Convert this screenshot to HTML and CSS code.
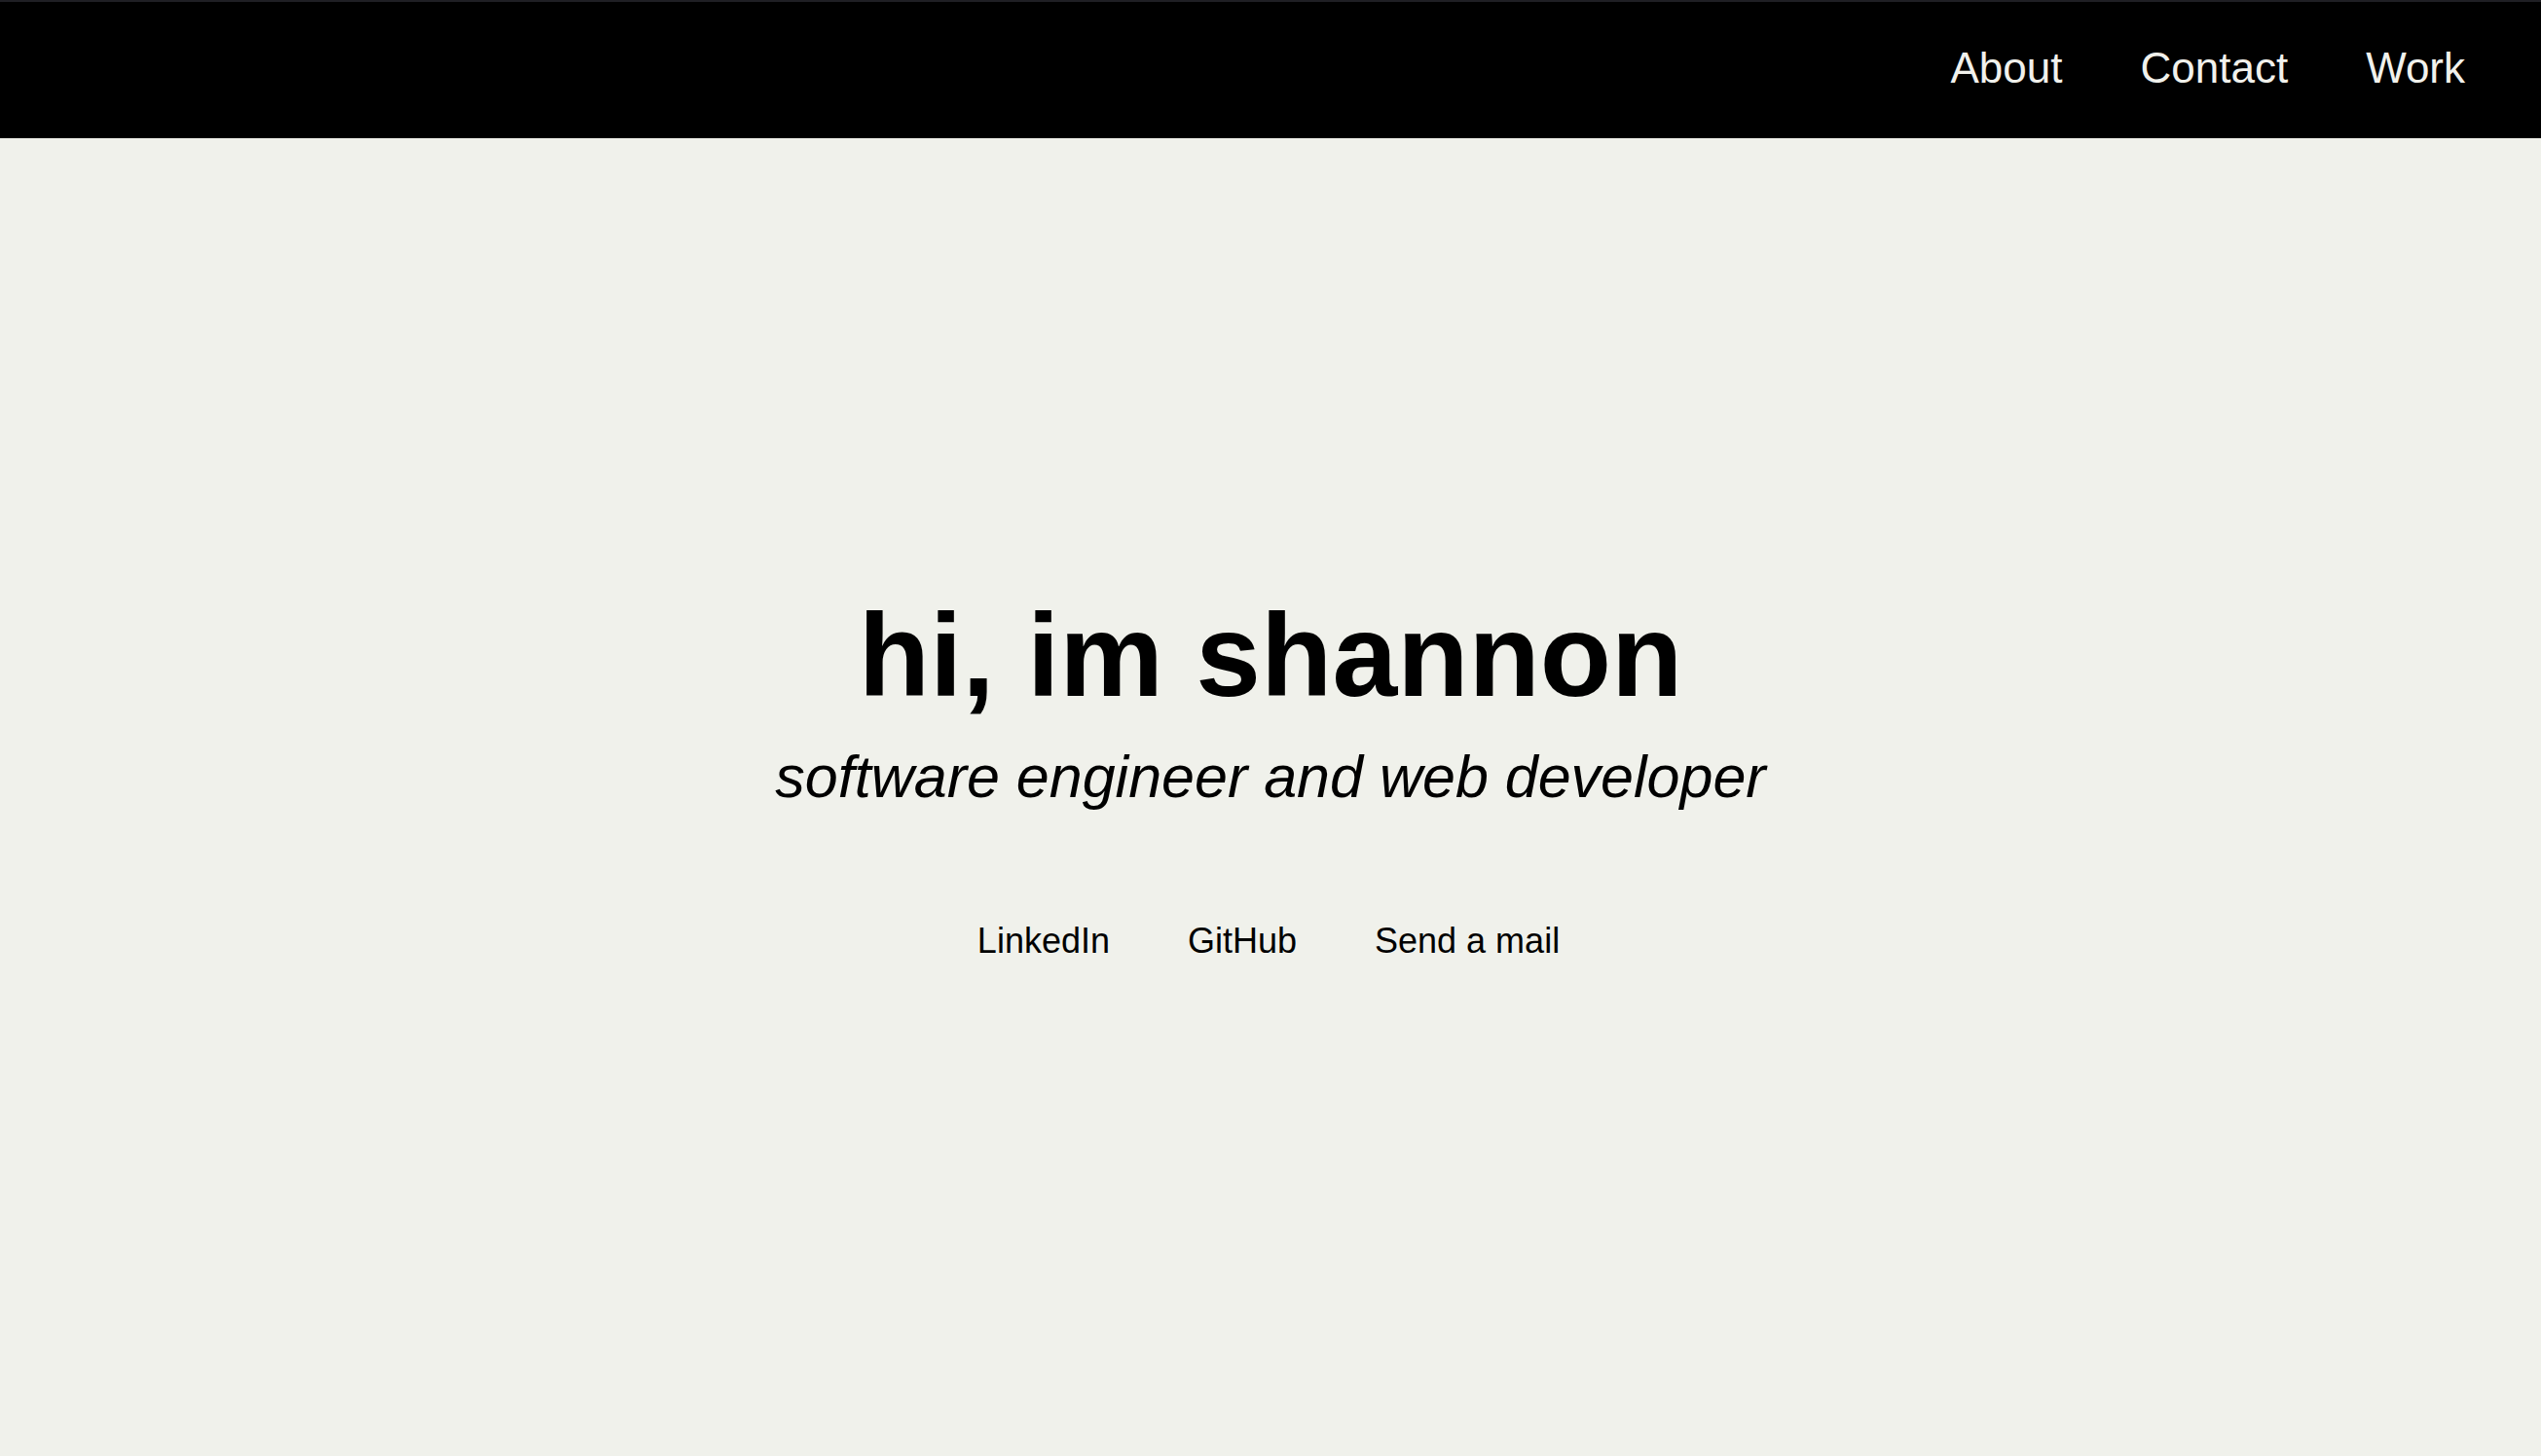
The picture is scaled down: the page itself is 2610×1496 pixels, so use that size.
FILE: index.html
```html
<!DOCTYPE html>
<html lang="en">
<head>
<meta charset="utf-8">
<title>shannon</title>
<link rel="stylesheet" href="styles.css">
</head>
<body>
<header class="topbar">
  <nav class="nav">
    <a class="nav-link" href="#about">About</a>
    <a class="nav-link" href="#contact">Contact</a>
    <a class="nav-link" href="#work">Work</a>
  </nav>
</header>
<main class="hero">
  <h1 class="hero-title">hi, im shannon</h1>
  <p class="hero-sub">software engineer and web developer</p>
  <div class="hero-links">
    <a class="hero-link" href="#linkedin">LinkedIn</a>
    <a class="hero-link" href="#github">GitHub</a>
    <a class="hero-link" href="#mail">Send a mail</a>
  </div>
</main>
</body>
</html>
```

FILE: styles.css
```css
html, body {
  margin: 0;
  padding: 0;
}
body {
  background: #f0f1eb;
  color: #000;
  font-family: "Liberation Sans", Arial, Helvetica, sans-serif;
  min-height: 100vh;
}
.topbar {
  background: #000;
  border-top: 2px solid #1f1f24;
  height: 140px;
  display: flex;
  align-items: center;
  justify-content: flex-end;
  padding: 0 78px;
}
.nav {
  display: flex;
  gap: 80px;
  margin-top: -4px;
}
.nav-link {
  color: #f1f1ec;
  text-decoration: none;
  font-size: 44px;
}
.hero {
  display: flex;
  flex-direction: column;
  align-items: center;
  padding-top: 462px;
}
.hero-title {
  margin: 0;
  font-size: 120px;
  font-weight: 700;
  line-height: 138px;
}
.hero-sub {
  margin: 21px 0 0;
  font-size: 61px;
  font-style: italic;
  line-height: 70px;
}
.hero-links {
  margin-top: 113px;
  display: flex;
  gap: 80px;
  margin-left: -4px;
}
.hero-link {
  color: #000;
  text-decoration: none;
  font-size: 36px;
  line-height: 41px;
}
```
